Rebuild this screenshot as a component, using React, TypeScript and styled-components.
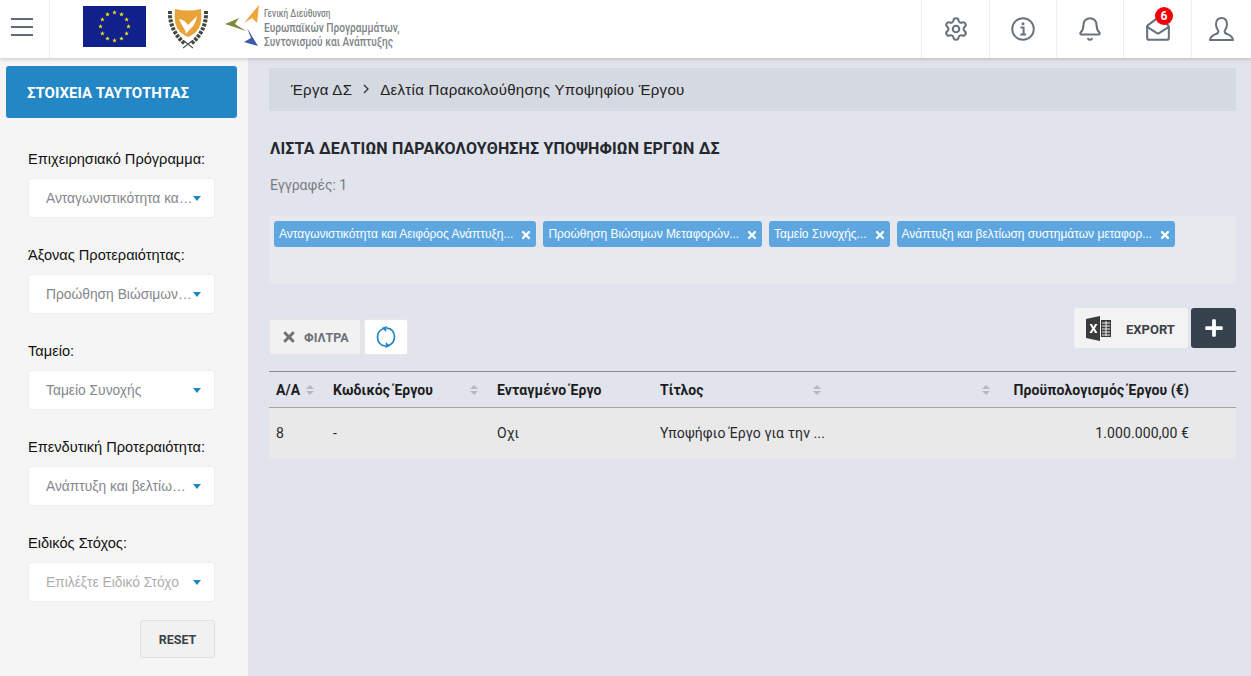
import React from 'react';
import styled, { createGlobalStyle } from 'styled-components';
import { Settings, Bell, MailOpen } from 'lucide-react';
import { FaTimes, FaPlus } from 'react-icons/fa';

const GREEK_TEXT = '"Liberation Sans", Arial, sans-serif';

const GlobalStyle = createGlobalStyle`
  html, body {
    margin: 0;
    padding: 0;
    height: 100%;
    overflow: hidden;
    background: #e1e4ec;
    font-family: Roboto, "Liberation Sans", sans-serif;
  }
  * { box-sizing: border-box; }
`;

const Page = styled.div`
  width: 1251px;
  height: 676px;
  display: flex;
  flex-direction: column;
  overflow: hidden;
`;

const Header = styled.header`
  height: 58px;
  flex: none;
  display: flex;
  align-items: stretch;
  background: #fff;
  box-shadow: 0 1px 4px rgba(0, 0, 0, 0.2);
  position: relative;
  z-index: 2;
`;

const MenuButton = styled.div`
  width: 50px;
  border-right: 1px solid #eee;
  display: flex;
  flex-direction: column;
  justify-content: center;
  gap: 6px;
  padding: 0 0 5px 11px;

  span {
    display: block;
    width: 22px;
    height: 2px;
    background: #5f6b75;
  }
`;

const Logos = styled.div`
  flex: 1;
  display: flex;
  align-items: flex-start;
  padding: 6px 0 0 33px;
`;

const LogoText = styled.div`
  margin: 1px 0 0 4px;
  color: #7d8388;
  font-weight: 500;
  white-space: nowrap;
  line-height: 14px;
  font-size: 13px;
  transform: scaleX(0.78);
  transform-origin: left top;

  small {
    display: block;
    font-size: 10.5px;
    line-height: 13px;
    margin-bottom: 1px;
  }
`;

const HeaderTool = styled.div<{ $w: number }>`
  width: ${p => p.$w}px;
  border-left: 1px solid #eee;
  display: flex;
  align-items: center;
  justify-content: center;
  color: #67727c;
  position: relative;
`;

const Badge = styled.span`
  position: absolute;
  top: 7px;
  left: 31px;
  width: 18px;
  height: 18px;
  border-radius: 50%;
  background: #f40009;
  color: #fff;
  font-size: 12px;
  font-weight: 700;
  display: flex;
  align-items: center;
  justify-content: center;
`;

const Body = styled.div`
  flex: 1;
  display: flex;
  min-height: 0;
`;

const Sidebar = styled.aside`
  width: 248px;
  flex: none;
  background: #f5f5f5;
  padding: 8px 11px 0 6px;
`;

const SideTitle = styled.div`
  height: 52px;
  background: #2487c5;
  border-radius: 3px;
  color: #fff;
  font-size: 15px;
  font-weight: 700;
  display: flex;
  align-items: center;
  padding: 2px 0 0 21px;
  margin-bottom: 33px;
`;

const Field = styled.div`
  padding-left: 22px;
  margin-bottom: 29px;
`;

const FieldLabel = styled.div`
  font-family: ${GREEK_TEXT};
  font-size: 14.6px;
  line-height: 16px;
  color: #111;
  margin-bottom: 11px;
  white-space: nowrap;
`;

const Select = styled.div<{ $placeholder?: boolean }>`
  width: 187px;
  height: 40px;
  background: #fff;
  border: 1px solid #eeeeee;
  border-radius: 3px;
  display: flex;
  align-items: center;
  padding-left: 17px;
  font-family: ${GREEK_TEXT};
  font-size: 13.8px;
  color: ${p => (p.$placeholder ? '#adadad' : '#84878c')};

  span {
    flex: 1;
    min-width: 0;
    margin-right: -1px;
    white-space: nowrap;
    overflow: hidden;
    text-overflow: ellipsis;
  }

  &::after {
    content: '';
    flex: none;
    width: 0;
    height: 0;
    margin: 0 13px 0 0;
    border-left: 4.5px solid transparent;
    border-right: 4.5px solid transparent;
    border-top: 5px solid #2487c5;
  }
`;

const ResetRow = styled.div`
  display: flex;
  justify-content: flex-end;
  margin: -11px 22px 0 0;
`;

const ResetButton = styled.div`
  width: 75px;
  height: 38px;
  background: #f1f1f1;
  border: 1px solid #e0e0e0;
  border-radius: 3px;
  color: #3c4146;
  font-size: 12.5px;
  font-weight: 700;
  display: flex;
  align-items: center;
  justify-content: center;
`;

const Main = styled.main`
  flex: 1;
  min-width: 0;
  padding: 10px 15px 0 21px;
`;

const Breadcrumb = styled.div`
  height: 43px;
  background: #d5d9e1;
  display: flex;
  align-items: center;
  padding: 0 0 1px 22px;
  font-family: ${GREEK_TEXT};
  font-size: 15px;
  letter-spacing: 0.3px;
  color: #222;

  svg { margin: 0 10px; }
`;

const Title = styled.h1`
  margin: 29px 0 0 1px;
  font-size: 16px;
  letter-spacing: 0.17px;
  line-height: 18px;
  font-weight: 700;
  color: #25282c;
  text-transform: uppercase;
`;

const Count = styled.div`
  margin: 19px 0 0 1px;
  font-size: 14px;
  line-height: 16px;
  color: #777c82;
`;

const TagsBox = styled.div`
  margin-top: 23px;
  height: 68px;
  background: #e6e8ed;
  border-radius: 3px;
  padding: 5px;
  display: flex;
  align-items: flex-start;
  gap: 7px;
`;

const Tag = styled.div`
  height: 26px;
  background: #5da6df;
  border-radius: 3px;
  color: #fff;
  font-family: ${GREEK_TEXT};
  font-size: 12px;
  letter-spacing: -0.03px;
  display: flex;
  align-items: center;
  padding: 0 4px 0 5px;
  white-space: nowrap;

  svg { margin: 1px 0 0 7px; }
`;

const Toolbar = styled.div`
  display: flex;
  align-items: flex-start;
  justify-content: space-between;
  margin-top: 24px;
  height: 63px;
`;

const ToolGroup = styled.div<{ $top?: number }>`
  display: flex;
  gap: 3px;
  margin-top: ${p => p.$top ?? 0}px;
`;

const FilterButton = styled.div`
  width: 92px;
  height: 36px;
  background: #f1f1f1;
  border: 1px solid #e4e4e4;
  border-radius: 3px;
  color: #6d7278;
  font-size: 12.5px;
  font-weight: 700;
  display: flex;
  align-items: center;
  padding-left: 11px;
  gap: 7px;
`;

const RefreshButton = styled.div`
  width: 44px;
  height: 36px;
  background: #fff;
  border: 1px solid #e8e8e8;
  border-radius: 3px;
  display: flex;
  align-items: center;
  justify-content: center;
  color: #2487c5;
`;

const ExportButton = styled.div`
  width: 114px;
  height: 40px;
  background: #f3f3f3;
  border-radius: 3px;
  color: #3c4146;
  font-size: 13px;
  font-weight: 700;
  display: flex;
  align-items: center;
  padding-left: 12px;
  gap: 15px;

  span { margin-top: 3px; }
`;

const AddButton = styled.div`
  width: 45px;
  height: 40px;
  background: #36434f;
  border-radius: 3px;
  color: #fff;
  display: flex;
  align-items: center;
  justify-content: center;
`;

const COLUMNS = '57px 164px 163px 180px 169px 1fr';

const HeadRow = styled.div`
  display: grid;
  grid-template-columns: ${COLUMNS};
  height: 37px;
  border-top: 1px solid #8b8b8b;
  border-bottom: 1px solid #a3a3a3;
  font-size: 14px;
  letter-spacing: 0.1px;
  font-weight: 700;
  color: #1c1c1c;
`;

const HeadCell = styled.div<{ $right?: boolean }>`
  display: flex;
  align-items: center;
  justify-content: ${p => (p.$right ? 'flex-end' : 'space-between')};
  padding: 0 ${p => (p.$right ? '47px' : '12px')} 0 7px;
  white-space: nowrap;
`;

const SortIcon = styled.span`
  display: inline-flex;
  flex-direction: column;
  gap: 2px;

  &::before,
  &::after {
    content: '';
    width: 0;
    height: 0;
    border-left: 4px solid transparent;
    border-right: 4px solid transparent;
  }
  &::before { border-bottom: 4px solid #b5b8bd; }
  &::after { border-top: 4px solid #b5b8bd; }
`;

const BodyRow = styled.div`
  display: grid;
  grid-template-columns: ${COLUMNS};
  height: 50px;
  background: #e9e9e9;
  font-size: 14px;
  letter-spacing: 0.1px;
  color: #26292c;
`;

const BodyCell = styled.div<{ $right?: boolean }>`
  display: flex;
  align-items: center;
  justify-content: ${p => (p.$right ? 'flex-end' : 'flex-start')};
  padding: 0 ${p => (p.$right ? '47px' : '0')} 0 7px;
  white-space: nowrap;
`;

const starPoints = (cx: number, cy: number) =>
  Array.from({ length: 10 })
    .map((_, i) => {
      const r = i % 2 === 0 ? 2.4 : 1;
      const a = (i * Math.PI) / 5;
      return `${(cx + r * Math.sin(a)).toFixed(2)},${(cy - r * Math.cos(a)).toFixed(2)}`;
    })
    .join(' ');

const EuFlag = () => (
  <svg width="63" height="41" viewBox="0 0 63 41" style={{ flex: 'none' }}>
    <rect width="63" height="41" fill="#10218b" />
    {Array.from({ length: 12 }).map((_, i) => {
      const a = (i * Math.PI) / 6;
      return <polygon key={i} points={starPoints(31.5 + 14 * Math.sin(a), 20.5 - 14 * Math.cos(a))} fill="#f7e514" />;
    })}
  </svg>
);

const CyprusEmblem = () => (
  <svg width="40" height="42" viewBox="0 0 40 42" style={{ flex: 'none', margin: '2px 0 0 22px' }}>
    <path d="M7 1 Q20 4 33 1 Q35 17 28 24 Q23 28 20 29 Q17 28 12 24 Q5 17 7 1 Z" fill="#e9a33b" />
    <path d="M11 11 Q17 12 20 17 L29 8 Q27 18 22 21 L18 26 L17 22 Q14 18 11 11 Z" fill="#fff" />
    <path d="M2 3 Q1 22 17 36" fill="none" stroke="#3f4a3b" strokeWidth="4" strokeDasharray="3 1.2" />
    <path d="M38 3 Q39 22 23 36" fill="none" stroke="#3f4a3b" strokeWidth="4" strokeDasharray="3 1.2" />
    <path d="M15 40 L24 33 M25 40 L16 33" stroke="#555" strokeWidth="1.2" />
  </svg>
);

const ArrowsMark = () => (
  <svg width="36" height="44" viewBox="0 0 36 44" style={{ flex: 'none', margin: '-2px 0 0 16px' }}>
    <path d="M35 1 L20 19 L28 14 L33 19 Z" fill="#f0a63a" />
    <path d="M1 20 L15 14 L11 20 L22 27 Z" fill="#7f8a3c" />
    <path d="M23 24 L34 42 L20 38 L27 34 Z" fill="#3f5ba8" />
  </svg>
);

const InfoIcon = () => (
  <svg width="24" height="24" viewBox="0 0 24 24" fill="none" stroke="currentColor">
    <circle cx="12" cy="12" r="10.8" strokeWidth="1.9" />
    <circle cx="12" cy="6.8" r="1.5" fill="currentColor" stroke="none" />
    <path d="M9.5 10.5 H12.6 V17.2 M9.3 17.6 H15" strokeWidth="2" />
  </svg>
);

const UserIcon = () => (
  <svg width="25" height="24" viewBox="0 0 25 24" fill="none" stroke="currentColor" strokeWidth="2" strokeLinejoin="round">
    <path d="M12.5 1 C8.5 1 7 4 7 7.5 C7 10.5 8.3 12.5 9.4 14 C9.6 15.5 9 16.2 7 17 C4 18.2 1.5 19 1 23 H24 C23.5 19 21 18.2 18 17 C16 16.2 15.4 15.5 15.6 14 C16.7 12.5 18 10.5 18 7.5 C18 4 16.5 1 12.5 1 Z" />
  </svg>
);

const SyncIcon = () => (
  <svg width="20" height="22" viewBox="0 0 20 22" fill="none" stroke="currentColor" strokeWidth="1.7">
    <path d="M11 2.2 C15.5 2.4 18.5 6 18.5 11 C18.5 15 16 18 12.5 19.5" />
    <path d="M9 19.8 C4.5 19.6 1.5 16 1.5 11 C1.5 7 4 4 7.5 2.5" />
    <path d="M11 0 L6 1.8 L10 6 Z" fill="currentColor" stroke="none" />
    <path d="M9 22 L14 20.2 L10 16 Z" fill="currentColor" stroke="none" />
  </svg>
);

const ExcelIcon = () => (
  <svg width="25" height="25" viewBox="0 0 25 25">
    <path d="M0 3 L14 0 V25 L0 22 Z" fill="#3a3a3a" />
    <path d="M3.5 8 H6 L7.5 11 L9 8 H11.5 L8.8 12.5 L11.5 17 H9 L7.5 14 L6 17 H3.5 L6.2 12.5 Z" fill="#fff" />
    <path d="M15 4 H25 V21 H15 Z" fill="#3a3a3a" />
    <path d="M16 7 H24 M16 10 H24 M16 13 H24 M16 16 H24 M16 19 H24 M20 5 V20" stroke="#f3f3f3" strokeWidth="1" />
  </svg>
);

const SIDE_FIELDS = [
  { label: 'Επιχειρησιακό Πρόγραμμα:', value: 'Ανταγωνιστικότητα και Αειφόρος Ανάπτυξη' },
  { label: 'Άξονας Προτεραιότητας:', value: 'Προώθηση Βιώσιμων Μεταφορών' },
  { label: 'Ταμείο:', value: 'Ταμείο Συνοχής' },
  { label: 'Επενδυτική Προτεραιότητα:', value: 'Ανάπτυξη και βελτίωση συστημάτων' },
  { label: 'Ειδικός Στόχος:', value: 'Επιλέξτε Ειδικό Στόχο', placeholder: true },
];

const TAGS = [
  'Ανταγωνιστικότητα και Αειφόρος Ανάπτυξη...',
  'Προώθηση Βιώσιμων Μεταφορών...',
  'Ταμείο Συνοχής...',
  'Ανάπτυξη και βελτίωση συστημάτων μεταφορ...',
];

export default function App() {
  return (
    <Page>
      <GlobalStyle />
      <Header>
        <MenuButton>
          <span />
          <span />
          <span />
        </MenuButton>
        <Logos>
          <EuFlag />
          <CyprusEmblem />
          <ArrowsMark />
          <LogoText>
            <small>Γενική Διεύθυνση</small>
            Ευρωπαϊκών Προγραμμάτων,
            <br />
            Συντονισμού και Ανάπτυξης
          </LogoText>
        </Logos>
        <HeaderTool $w={68}><Settings size={26} strokeWidth={1.9} /></HeaderTool>
        <HeaderTool $w={67}><InfoIcon /></HeaderTool>
        <HeaderTool $w={67}><Bell size={26} strokeWidth={1.9} /></HeaderTool>
        <HeaderTool $w={68}>
          <MailOpen size={26} strokeWidth={1.9} />
          <Badge>6</Badge>
        </HeaderTool>
        <HeaderTool $w={60}><UserIcon /></HeaderTool>
      </Header>
      <Body>
        <Sidebar>
          <SideTitle>ΣΤΟΙΧΕΙΑ ΤΑΥΤΟΤΗΤΑΣ</SideTitle>
          {SIDE_FIELDS.map(f => (
            <Field key={f.label}>
              <FieldLabel>{f.label}</FieldLabel>
              <Select $placeholder={f.placeholder}><span>{f.value}</span></Select>
            </Field>
          ))}
          <ResetRow><ResetButton>RESET</ResetButton></ResetRow>
        </Sidebar>
        <Main>
          <Breadcrumb>
            Έργα ΔΣ
            <svg width="8" height="10" viewBox="0 0 8 10" fill="none" stroke="#333" strokeWidth="1.3"><path d="M2 1 L6 5 L2 9" /></svg>
            Δελτία Παρακολούθησης Υποψηφίου Έργου
          </Breadcrumb>
          <Title>Λιστα Δελτιων Παρακολουθησης Υποψηφιων Εργων ΔΣ</Title>
          <Count>Εγγραφές: 1</Count>
          <TagsBox>
            {TAGS.map(t => (
              <Tag key={t}>{t}<FaTimes size={12} /></Tag>
            ))}
          </TagsBox>
          <Toolbar>
            <ToolGroup $top={11}>
              <FilterButton><FaTimes size={16} />ΦΙΛΤΡΑ</FilterButton>
              <RefreshButton><SyncIcon /></RefreshButton>
            </ToolGroup>
            <ToolGroup>
              <ExportButton><ExcelIcon /><span>EXPORT</span></ExportButton>
              <AddButton><FaPlus size={20} /></AddButton>
            </ToolGroup>
          </Toolbar>
          <HeadRow>
            <HeadCell>Α/Α<SortIcon /></HeadCell>
            <HeadCell>Κωδικός Έργου<SortIcon /></HeadCell>
            <HeadCell>Ενταγμένο Έργο</HeadCell>
            <HeadCell>Τίτλος<SortIcon /></HeadCell>
            <HeadCell><span /><SortIcon /></HeadCell>
            <HeadCell $right>Προϋπολογισμός Έργου (€)</HeadCell>
          </HeadRow>
          <BodyRow>
            <BodyCell>8</BodyCell>
            <BodyCell>-</BodyCell>
            <BodyCell>Οχι</BodyCell>
            <BodyCell>Υποψήφιο Έργο για την ...</BodyCell>
            <BodyCell />
            <BodyCell $right>1.000.000,00 €</BodyCell>
          </BodyRow>
        </Main>
      </Body>
    </Page>
  );
}
